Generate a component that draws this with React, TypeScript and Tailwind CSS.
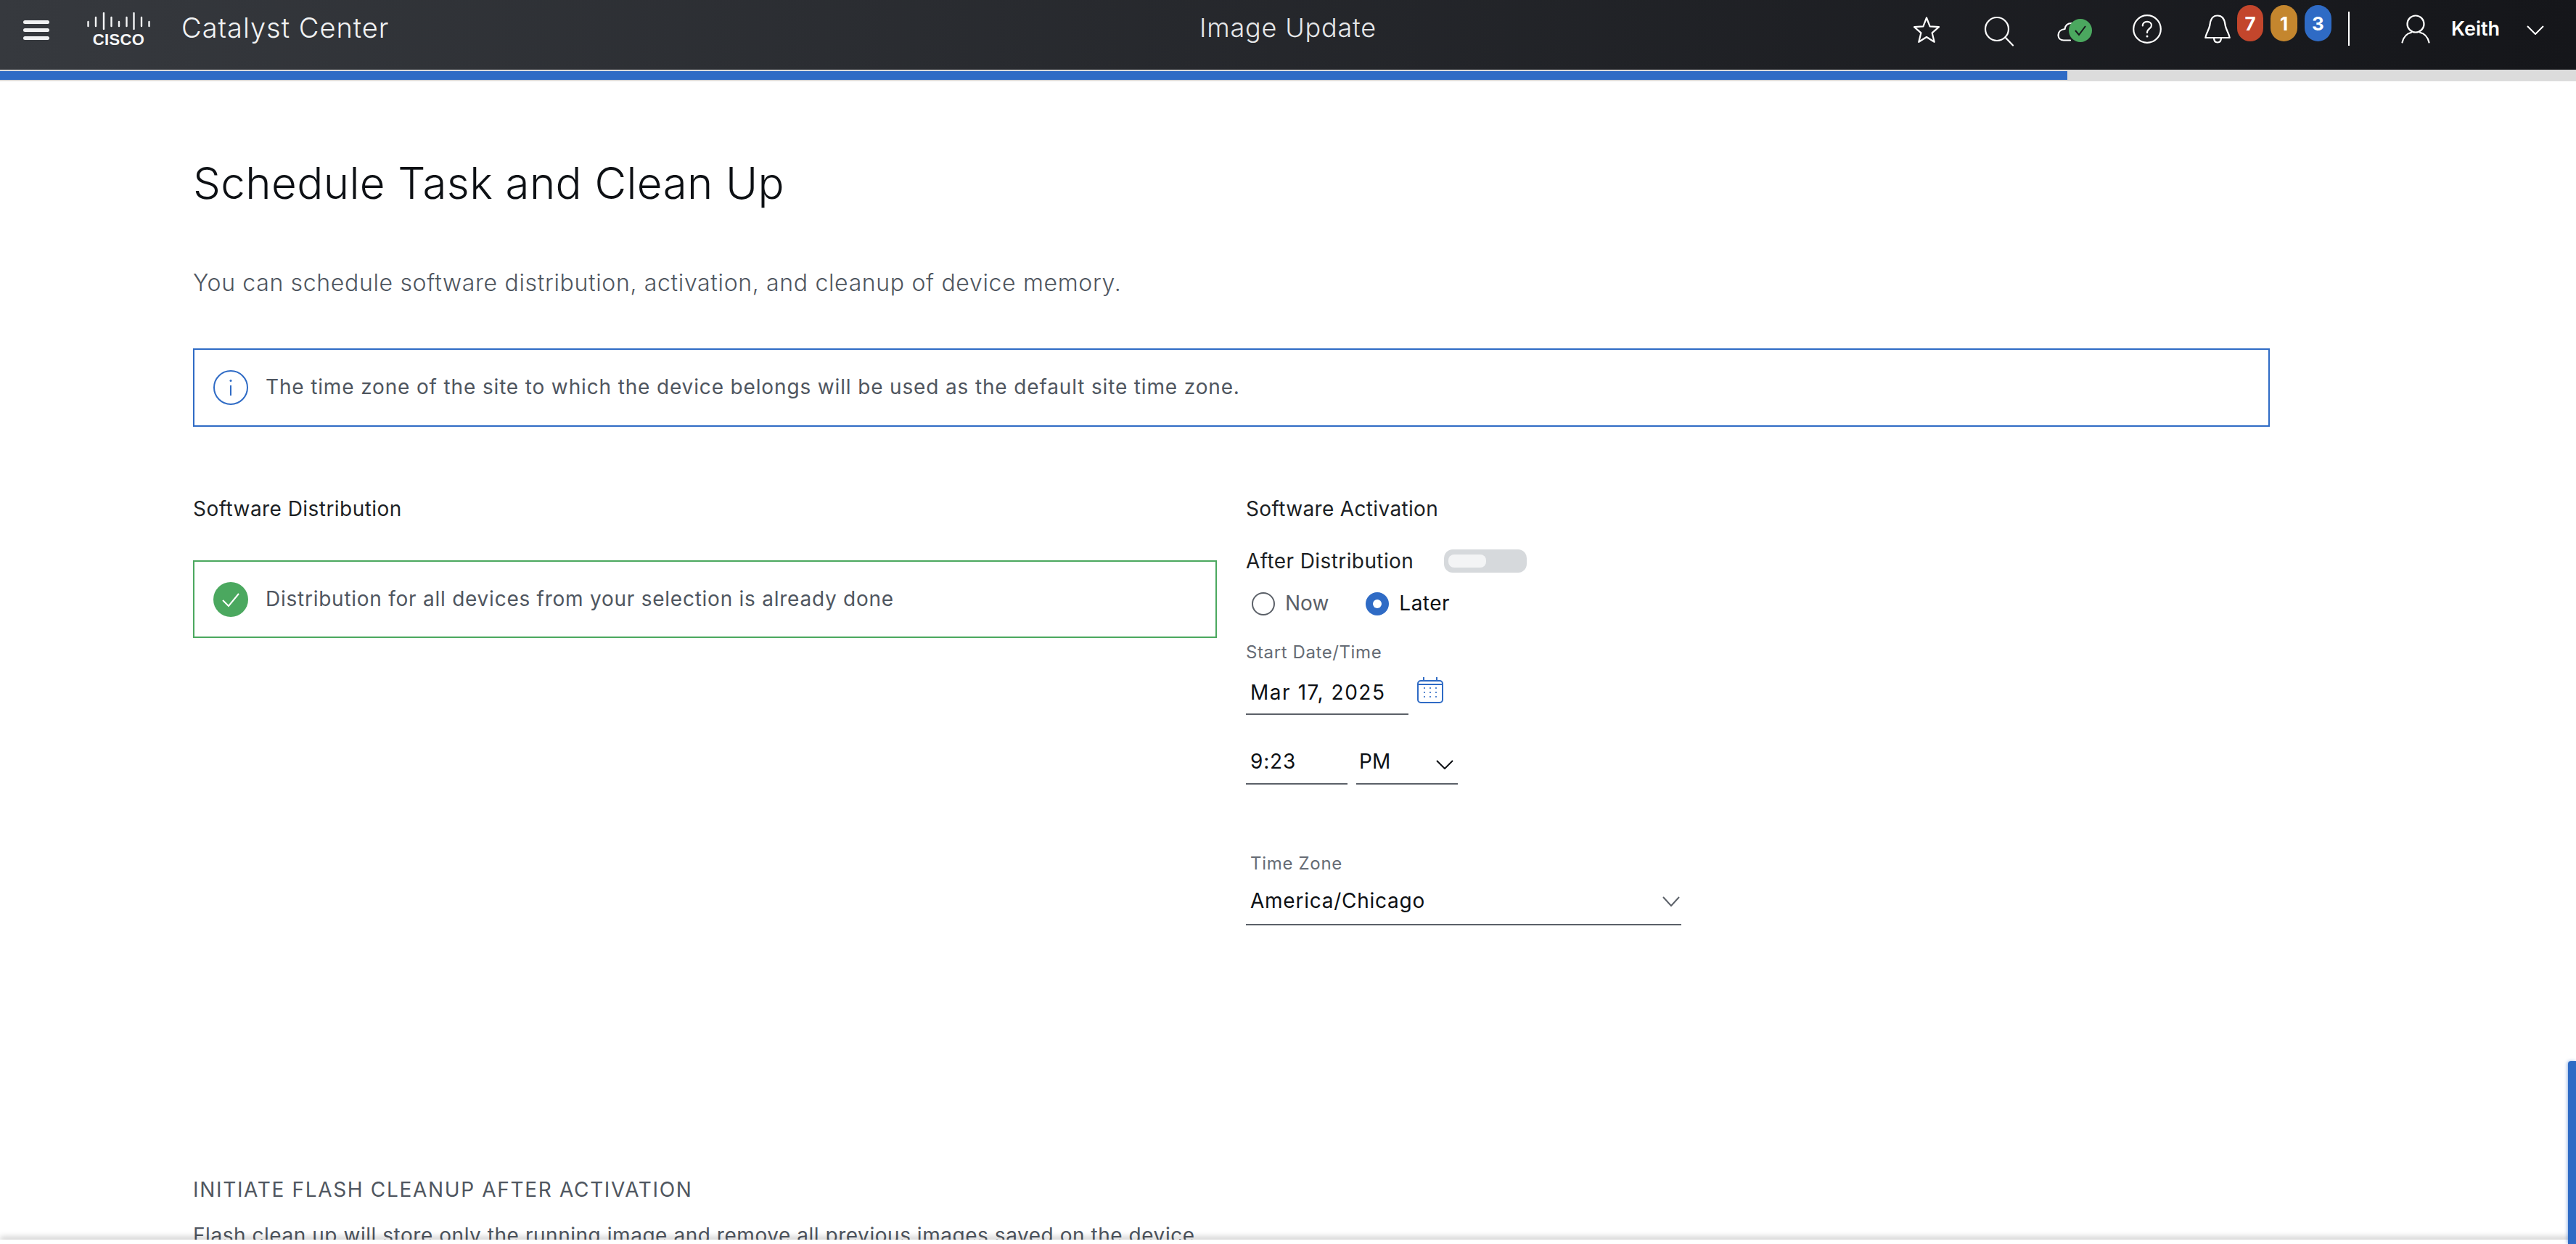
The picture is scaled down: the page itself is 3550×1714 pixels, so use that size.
const font = "[font-family:Inter,'Liberation_Sans',sans-serif]";

function CiscoLogo() {
  const bars = [
    { x: 1.5, y1: 12, y2: 20 },
    { x: 12, y1: 6, y2: 20 },
    { x: 23, y1: 0, y2: 24 },
    { x: 33.5, y1: 6, y2: 20 },
    { x: 44, y1: 12, y2: 20 },
    { x: 54.5, y1: 6, y2: 20 },
    { x: 64.5, y1: 0, y2: 24 },
    { x: 75, y1: 6, y2: 20 },
    { x: 85.5, y1: 12, y2: 20 },
  ];
  return (
    <div className="flex w-[87px] flex-col items-center">
      <svg width="87" height="24" viewBox="0 0 87 24" className="block">
        {bars.map((b, i) => (
          <line key={i} x1={b.x} x2={b.x} y1={b.y1 + 1} y2={b.y2 - 1} stroke="#f4f5f6" strokeWidth="2.4" strokeLinecap="round" />
        ))}
      </svg>
      <span className="mt-[5px] text-[22px] leading-[17px] font-bold tracking-[0.4px] text-[#f4f5f6] [font-family:'Liberation_Sans',sans-serif]">CISCO</span>
    </div>
  );
}

const stroke = { fill: "none", stroke: "#fff", strokeWidth: 2.2, strokeLinecap: "round" as const, strokeLinejoin: "round" as const };

function Star() {
  return (
    <svg width="38" height="38" viewBox="0 0 38 38" className="block">
      <path d="M19 2.500 23.600 14.400 36 15.200 26.600 23.300 29.700 35.800 19 29 8.300 35.800 11.400 23.300 2 15.200 14.400 14.400Z" {...stroke} />
    </svg>
  );
}
function Search() {
  return (
    <svg width="42" height="42" viewBox="0 0 42 42" className="block">
      <circle cx="18" cy="18" r="16" {...stroke} />
      <path d="M29.500 29.500 40 40.500" {...stroke} />
    </svg>
  );
}
function Cloud() {
  return (
    <div className="relative h-[34px] w-[48px]">
      <svg width="24" height="34" viewBox="0 0 24 34" className="absolute left-0 top-0 block">
        <path d="M20 6C13 6 11 10 10.500 14C5 14.500 1.500 18 1.500 22.500C1.500 27 5 29.500 9 29.500H18" {...stroke} />
      </svg>
      <div className="absolute right-0 top-0 flex h-[32px] w-[32px] items-center justify-center rounded-full bg-[#4ba85f]">
        <svg width="18" height="16" viewBox="0 0 18 16" className="block">
          <path d="M2 8 7 14 16 2" fill="none" stroke="#17181c" strokeWidth="2" />
        </svg>
      </div>
    </div>
  );
}
function Help() {
  return (
    <svg width="40" height="40" viewBox="0 0 40 40" className="block">
      <circle cx="20" cy="20" r="18.800" {...stroke} />
      <path d="M13.800 15.500C13.800 11.800 16.500 9.800 20 9.800C23.500 9.800 26 11.900 26 15C26 19.500 20 19.500 20 25" {...stroke} />
      <circle cx="20" cy="30" r="1.500" fill="#fff" />
    </svg>
  );
}
function Bell() {
  return (
    <svg width="36" height="40" viewBox="0 0 36 40" className="block">
      <path d="M1.500 32C1.500 27 6.500 21 7.500 14C8.300 6 12 1.500 18 1.500C24 1.500 27.700 6 28.500 14C29.500 21 34.500 27 34.500 32Z" {...stroke} />
      <path d="M1.500 32H34.500" {...stroke} />
      <path d="M13 32C13 36 15 38.500 18 38.500C21 38.500 23 36 23 32" {...stroke} />
    </svg>
  );
}
function User() {
  return (
    <svg width="40" height="40" viewBox="0 0 40 40" className="block">
      <ellipse cx="20" cy="13" rx="11.500" ry="11.500" {...stroke} />
      <path d="M1.500 38.500C3.500 30.500 8.500 26 14 24.800M38.500 38.500C36.500 30.500 31.500 26 26 24.800" {...stroke} />
    </svg>
  );
}
function Chevron({ color = "#fff", w = 24, h = 13, sw = 2 }: { color?: string; w?: number; h?: number; sw?: number }) {
  return (
    <svg width={w} height={h} viewBox={`0 0 ${w} ${h}`} className="block">
      <path d={`M1 1 ${w / 2} ${h - 1} ${w - 1} 1`} fill="none" stroke={color} strokeWidth={sw} />
    </svg>
  );
}

function Header() {
  return (
    <header className="grid h-[96px] grid-cols-[1fr_auto_1fr] bg-gradient-to-r from-[#36393e] to-[#15161a] text-white">
      <div className="flex items-start">
        <div className="ml-[32px] mt-[28px] flex w-[36px] flex-col gap-[6px]">
          <div className="h-[5px] rounded-full bg-[#f1f2f3]" />
          <div className="h-[5px] rounded-full bg-[#f1f2f3]" />
          <div className="h-[5px] rounded-full bg-[#f1f2f3]" />
        </div>
        <div className="ml-[52px] mt-[17px]">
          <CiscoLogo />
        </div>
        <div className="ml-[43px] mt-[14px] text-[38px] leading-[48px] font-light tracking-[1px] whitespace-nowrap text-[#f1f2f3]">Catalyst Center</div>
      </div>
      <div className="mt-[14px] text-[36px] leading-[48px] font-light tracking-[0.8px] text-[#e6e7e9]">Image Update</div>
      <div className="flex items-start justify-end pr-[44px]">
        <div className="mt-[22px]"><Star /></div>
        <div className="ml-[60px] mt-[22px]"><Search /></div>
        <div className="ml-[59px] mt-[26px]"><Cloud /></div>
        <div className="ml-[56px] mt-[20px]"><Help /></div>
        <div className="ml-[59px] mt-[20px]"><Bell /></div>
        <div className="ml-[9px] mt-[7px] flex h-[50px] w-[36px] items-center justify-center rounded-full bg-[#c3462c] text-[26px] font-bold">7</div>
        <div className="ml-[10px] mt-[7px] flex h-[50px] w-[37px] items-center justify-center rounded-full bg-[#c4862e] text-[26px] font-bold">1</div>
        <div className="ml-[10px] mt-[7px] flex h-[50px] w-[37px] items-center justify-center rounded-full bg-[#2f6bc5] text-[26px] font-bold">3</div>
        <div className="ml-[23px] mt-[16px] h-[47px] w-[2px] bg-white" />
        <div className="ml-[71px] mt-[20px]"><User /></div>
        <div className="ml-[29px] mt-[24px] w-[68px] text-[27px] leading-[32px] font-semibold whitespace-nowrap">Keith</div>
        <div className="ml-[36px] mt-[35px]"><Chevron /></div>
      </div>
    </header>
  );
}

function Progress() {
  return (
    <div className="h-[16px] border-t-[2px] border-b-[2px] border-[#dcdcdc] bg-[#dcdcdc]">
      <div className="h-[12px] w-[2849px] bg-[#2f6bc5]" />
    </div>
  );
}

function Banner({ tone, track, children, icon }: { tone: string; track: string; children: React.ReactNode; icon: React.ReactNode }) {
  return (
    <div className={`flex items-center border-[2px] pl-[26px] ${tone}`}>
      {icon}
      <div className={`ml-[24px] pb-[2px] text-[28px] leading-[36px] text-[#4f5660] ${track}`}>{children}</div>
    </div>
  );
}

function Info() {
  return (
    <svg width="48" height="48" viewBox="0 0 48 48" className="block">
      <circle cx="24" cy="24" r="23" fill="none" stroke="#2f6bc5" strokeWidth="2" />
      <path d="M24 21V35" stroke="#2f6bc5" strokeWidth="2" />
      <circle cx="24" cy="14.500" r="1.500" fill="#2f6bc5" />
    </svg>
  );
}
function Done() {
  return (
    <svg width="48" height="48" viewBox="0 0 48 48" className="block">
      <circle cx="24" cy="24" r="24" fill="#4ba85f" />
      <path d="M13 25 21 33 35 16" fill="none" stroke="#fff" strokeWidth="2" />
    </svg>
  );
}
function Calendar() {
  const dots = [];
  for (const cy of [15, 21, 27]) for (const cx of [10, 18, 26]) dots.push(<circle key={`${cx}${cy}`} cx={cx} cy={cy} r="1.100" fill="#2f6bc5" />);
  return (
    <svg width="36" height="36" viewBox="0 0 36 36" className="block">
      <rect x="1" y="5" width="34" height="30" rx="4" fill="none" stroke="#2f6bc5" strokeWidth="2" />
      <path d="M9 0V5M27 0V5M1 10H35" stroke="#2f6bc5" strokeWidth="2" />
      {dots}
    </svg>
  );
}
function Radio({ on }: { on: boolean }) {
  return on ? (
    <div className="flex h-[32px] w-[32px] items-center justify-center rounded-full bg-[#2f6bc5]">
      <div className="h-[12px] w-[12px] rounded-full bg-white" />
    </div>
  ) : (
    <div className="h-[32px] w-[32px] rounded-full border-[2px] border-[#5b6068]" />
  );
}

const underline = "border-b-[2px] border-[#5b6068]";

export default function App() {
  return (
    <div className={`relative h-[1714px] w-[3550px] overflow-hidden bg-white ${font}`}>
      <Header />
      <Progress />
      <main className="pl-[266px]">
        <h1 className="mt-[104px] text-[60px] leading-[72px] font-light tracking-[0.4px] text-[#0d1014]">Schedule Task and Clean Up</h1>
        <p className="mt-[82px] text-[32px] leading-[40px] font-light tracking-[0.66px] text-[#4f5660]">You can schedule software distribution, activation, and cleanup of device memory.</p>
        <div className="mt-[70px]">
          <Banner tone="h-[108px] w-[2862px] border-[#2f6bc5]" track="tracking-[0.85px]" icon={<Info />}>
            The time zone of the site to which the device belongs will be used as the default site time zone.
          </Banner>
        </div>
        <div className="mt-[95px] flex">
          <section className="w-[1451px]">
            <h2 className="text-[28px] leading-[36px] tracking-[0.45px] text-[#1c1f24]">Software Distribution</h2>
            <div className="mt-[53px]">
              <Banner tone="h-[107px] w-[1411px] border-[#4ba85f]" track="tracking-[0.75px]" icon={<Done />}>
                Distribution for all devices from your selection is already done
              </Banner>
            </div>
          </section>
          <section className="w-[620px]">
            <h2 className="text-[28px] leading-[36px] tracking-[0.35px] text-[#1c1f24]">Software Activation</h2>
            <div className="mt-[36px] flex h-[36px] items-center">
              <span className="text-[28px] leading-[36px] tracking-[0.4px] text-[#1c1f24]">After Distribution</span>
              <div className="ml-[42px] flex h-[32px] w-[114px] items-center rounded-[12px] bg-[#d6d9dc] pl-[6px]">
                <div className="h-[18px] w-[52px] rounded-[8px] bg-[#f3f4f5]" />
              </div>
            </div>
            <div className="mt-[25px] flex h-[32px] items-center pl-[8px]">
              <Radio on={false} />
              <span className="ml-[14px] pb-[2px] text-[28px] text-[#5b6068]">Now</span>
              <div className="ml-[51px]"><Radio on /></div>
              <span className="ml-[14px] pb-[2px] text-[28px] tracking-[0.5px] text-[#0d1014]">Later</span>
            </div>
            <div className="mt-[36px] text-[24px] leading-[30px] tracking-[0.6px] text-[#666c75]">Start Date/Time</div>
            <div className="mt-[21px] flex items-start">
              <div className={`h-[50px] w-[224px] pl-[6px] text-[28px] leading-[38px] tracking-[1.55px] text-[#0d1014] ${underline}`}>Mar 17, 2025</div>
              <div className="-mt-[2px] ml-[12px]"><Calendar /></div>
            </div>
            <div className="mt-[46px] flex">
              <div className={`h-[50px] w-[140px] pl-[6px] text-[28px] leading-[36px] tracking-[0.8px] text-[#0d1014] ${underline}`}>9:23</div>
              <div className={`ml-[12px] flex h-[50px] w-[140px] items-start justify-between pl-[4px] pr-[6px] text-[28px] leading-[36px] text-[#0d1014] ${underline}`}>
                <span>PM</span>
                <div className="mt-[16px]"><Chevron color="#0d1014" /></div>
              </div>
            </div>
            <div className="mt-[94px] pl-[6px] text-[24px] leading-[30px] tracking-[0.7px] text-[#666c75]">Time Zone</div>
            <div className={`mt-[20px] flex h-[50px] w-[600px] items-start justify-between pl-[6px] pr-[2px] text-[28px] leading-[32px] tracking-[0.75px] text-[#0d1014] ${underline}`}>
              <span>America/Chicago</span>
              <div className="mt-[10px]"><Chevron color="#5b6068" h={14} /></div>
            </div>
          </section>
        </div>
        <h3 className="mt-[346px] text-[28px] leading-[36px] tracking-[1.67px] text-[#4f5660]">INITIATE FLASH CLEANUP AFTER ACTIVATION</h3>
        <p className="mt-[27px] text-[28px] leading-[36px] tracking-[0.54px] whitespace-nowrap text-[#4f5660]">Flash clean up will store only the running image and remove all previous images saved on the device.</p>
      </main>
      <div className="absolute bottom-0 left-0 h-[6px] w-full bg-white shadow-[0_-3px_8px_rgba(0,0,0,0.25)]" />
      <div className="absolute bottom-0 right-0 h-[252px] w-[11px] rounded-tl-[4px] bg-[#2f6bc5] shadow-[-1px_0_4px_rgba(47,107,197,0.5)]" />
    </div>
  );
}
